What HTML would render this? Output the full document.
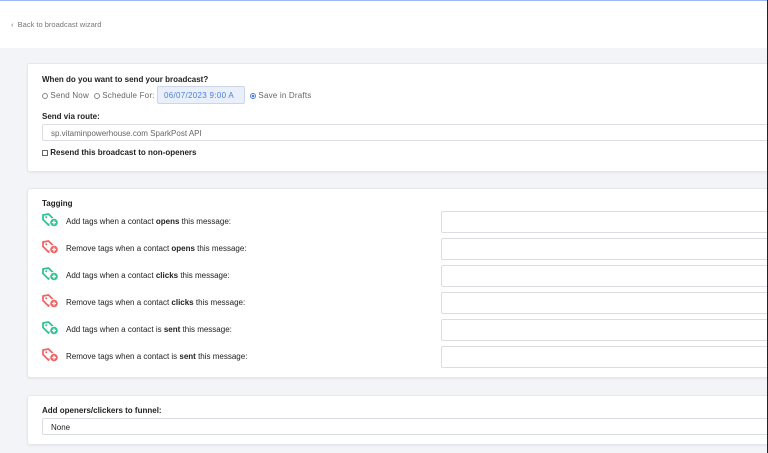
<!DOCTYPE html>
<html><head><style>
*{box-sizing:border-box;margin:0;padding:0}
body{width:768px;height:453px;overflow:hidden;background:#f3f4f8;font-family:"Liberation Sans",sans-serif;color:#222;position:relative;font-size:8px}
.hdr{position:absolute;left:0;top:0;width:768px;height:48px;background:#fff;border-top:1px solid #9bb8f0}
.back{position:absolute;left:11px;top:19px;color:#777;font-size:7.5px}
.card{position:absolute;left:27px;width:741px;background:#fff;border:1px solid #e6e7ee;border-right:none;border-radius:3px 0 0 3px;box-shadow:0 1px 2px rgba(0,0,0,.06)}
.edge{position:absolute;right:0;top:0;width:1px;height:453px;background:#222}
.b{font-weight:bold}
.abs{position:absolute}
.inp{position:absolute;background:#fff;border:1px solid #dcdde3;border-radius:2px;border-right:none}
.radio{display:inline-block;width:6px;height:6px;border:1px solid #888;border-radius:50%;vertical-align:-1px}
</style></head><body>
<div class="hdr"><div class="back">&#8249;&nbsp; Back to broadcast wizard</div></div>
<div class="card" style="top:63px;height:109px">
 <div class="abs b" style="left:14px;top:11px">When do you want to send your broadcast?</div>
 <div class="abs" style="left:14px;top:27px;color:#666;letter-spacing:.2px"><span class="radio"></span> Send Now &nbsp;<span class="radio"></span> Schedule For:</div>
 <div class="abs" style="left:129px;top:22px;width:88px;height:18px;background:#e9f0fb;border:1px solid #ccd6e8;border-radius:2px;color:#4a7fe0;padding:4px 0 0 6px;letter-spacing:.3px">06/07/2023 9:00 A</div>
 <div class="abs" style="left:222px;top:27px;color:#666;letter-spacing:.2px"><span class="radio" style="border-color:#4a7fe0;background:radial-gradient(#4a7fe0 40%,#fff 50%)"></span> Save in Drafts</div>
 <div class="abs b" style="left:14px;top:48px">Send via route:</div>
 <div class="inp" style="left:14px;top:60px;width:727px;height:17px;color:#666;padding:4px 0 0 8px">sp.vitaminpowerhouse.com SparkPost API</div>
 <div class="abs b" style="left:14px;top:84px"><span style="display:inline-block;width:6px;height:6px;border:1px solid #666;vertical-align:-1px"></span> Resend this broadcast to non-openers</div>
</div>
<div class="card" style="top:188px;height:190px">
 <div class="abs b" style="left:14px;top:10px">Tagging</div>
</div>
<div id="rows"></div>
<div class="card" style="top:395px;height:50px">
 <div class="abs b" style="left:14px;top:10px">Add openers/clickers to funnel:</div>
 <div class="inp" style="left:14px;top:22px;width:727px;height:17px;padding:4px 0 0 8px">None</div>
</div>
<script>
var d=[["Add","opens",1],["Remove","opens",0],["Add","clicks",1],["Remove","clicks",0],["Add","sent",1],["Remove","sent",0]];
var h="",ys=[211,238,265,292,319,346];
d.forEach(function(r,i){var c=r[2]?"#2ec495":"#f06464";var y=ys[i];
h+='<svg class="abs" style="left:41px;top:'+(y+2)+'px" width="19" height="16" viewBox="0 0 19 16"><path d="M2 2 L7.5 1 L13 6.5 L7.5 12 L2 6.5 Z" fill="none" stroke="'+c+'" stroke-width="1.8" stroke-linejoin="round"/><circle cx="5.2" cy="4.2" r="1" fill="'+c+'"/><circle cx="13" cy="9.5" r="4.3" fill="'+c+'" stroke="#fff" stroke-width="1"/><path d="M11 9.5H15M13 7.5V11.5" stroke="#fff" stroke-width="1.3"/></svg>';
h+='<div class="abs" style="left:66px;top:'+(y+6)+'px">'+r[0]+' tags when a contact '+(r[1]=="sent"?'is ':'')+'<b>'+r[1]+'</b> this message:</div>';
h+='<div class="inp" style="left:441px;top:'+y+'px;width:327px;height:22px"></div>';});
document.getElementById("rows").innerHTML=h;
</script>
<div class="edge"></div>
</body></html>
